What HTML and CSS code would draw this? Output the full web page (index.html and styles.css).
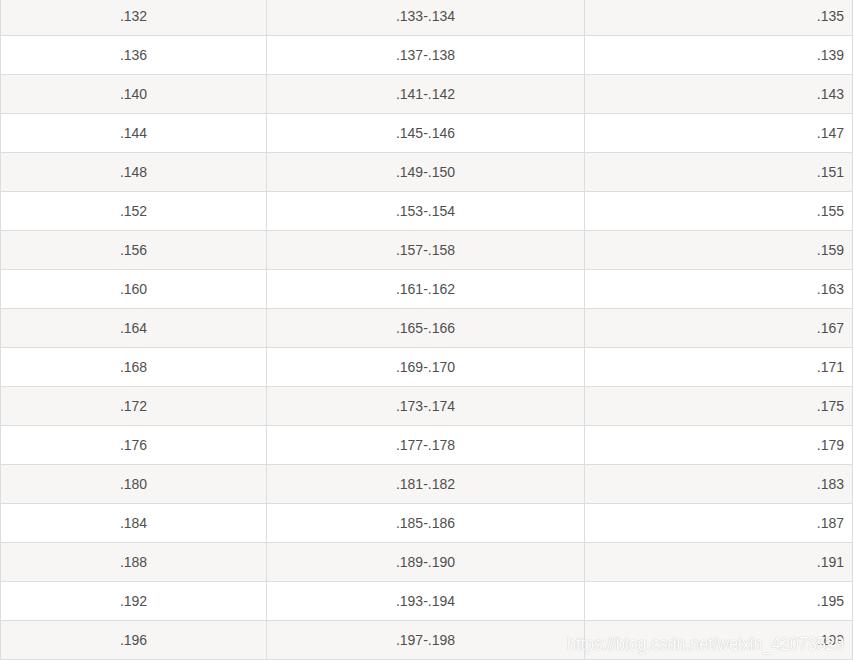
FILE: index.html
```html
<!DOCTYPE html>
<html>
<head>
<meta charset="utf-8">
<link rel="stylesheet" href="styles.css">
</head>
<body>
<div class="page">
<table class="grid">
<colgroup><col class="c1"><col class="c2"><col class="c3"></colgroup>
<tbody>
<tr class="alt"><td class="mid">.132</td><td class="mid">.133-.134</td><td class="end">.135</td></tr>
<tr><td class="mid">.136</td><td class="mid">.137-.138</td><td class="end">.139</td></tr>
<tr class="alt"><td class="mid">.140</td><td class="mid">.141-.142</td><td class="end">.143</td></tr>
<tr><td class="mid">.144</td><td class="mid">.145-.146</td><td class="end">.147</td></tr>
<tr class="alt"><td class="mid">.148</td><td class="mid">.149-.150</td><td class="end">.151</td></tr>
<tr><td class="mid">.152</td><td class="mid">.153-.154</td><td class="end">.155</td></tr>
<tr class="alt"><td class="mid">.156</td><td class="mid">.157-.158</td><td class="end">.159</td></tr>
<tr><td class="mid">.160</td><td class="mid">.161-.162</td><td class="end">.163</td></tr>
<tr class="alt"><td class="mid">.164</td><td class="mid">.165-.166</td><td class="end">.167</td></tr>
<tr><td class="mid">.168</td><td class="mid">.169-.170</td><td class="end">.171</td></tr>
<tr class="alt"><td class="mid">.172</td><td class="mid">.173-.174</td><td class="end">.175</td></tr>
<tr><td class="mid">.176</td><td class="mid">.177-.178</td><td class="end">.179</td></tr>
<tr class="alt"><td class="mid">.180</td><td class="mid">.181-.182</td><td class="end">.183</td></tr>
<tr><td class="mid">.184</td><td class="mid">.185-.186</td><td class="end">.187</td></tr>
<tr class="alt"><td class="mid">.188</td><td class="mid">.189-.190</td><td class="end">.191</td></tr>
<tr><td class="mid">.192</td><td class="mid">.193-.194</td><td class="end">.195</td></tr>
<tr class="alt"><td class="mid">.196</td><td class="mid">.197-.198</td><td class="end">.199</td></tr>
</tbody>
</table>
<div class="watermark">https://blog.csdn.net/weixin_42073529</div>
</div>
</body>
</html>
```
FILE: styles.css
```css
html, body {
  margin: 0;
  padding: 0;
  background: #fff;
}
.page {
  position: relative;
  width: 854px;
  height: 660px;
  overflow: hidden;
  font-family: "Liberation Sans", Arial, sans-serif;
}
.grid {
  border-collapse: collapse;
  table-layout: fixed;
  width: 852px;
  margin-top: -4px;
  font-size: 14px;
  color: #4f4f4f;
}
.c1 { width: 266px; }
.c2 { width: 318px; }
.c3 { width: 268px; }
.grid td {
  border: 1px solid #dddddd;
  height: 38px;
  line-height: 38px;
  padding: 0 8px;
  box-sizing: border-box;
}
.grid tr.alt td {
  background: #f7f6f4;
}
.mid { text-align: center; }
.end { text-align: right; }
.watermark {
  position: absolute;
  left: 567px;
  top: 632px;
  font-size: 16.3px;
  line-height: 20px;
  color: #ffffff;
  text-shadow: 0 0 1px #c8c8c8, 0 0 1px #c8c8c8;
  white-space: nowrap;
  transform: scaleY(1.15);
  transform-origin: left top;
}
```
